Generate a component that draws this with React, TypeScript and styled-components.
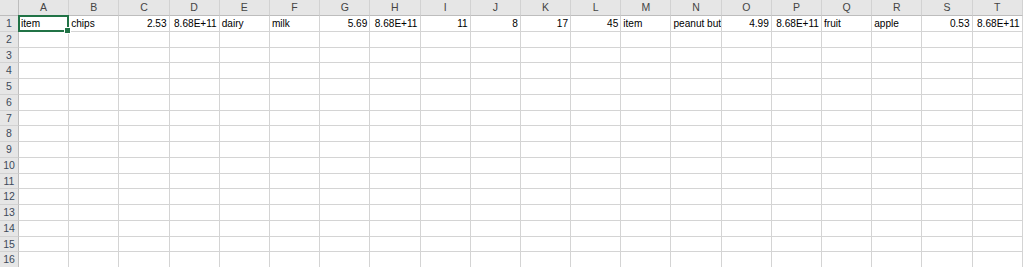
import React from "react";
import styled, { createGlobalStyle } from "styled-components";

const Global = createGlobalStyle`
  html, body { margin: 0; padding: 0; background: #ffffff; overflow: hidden; }
  body { font-family: "Liberation Sans", Arial, sans-serif; }
`;

const COLS = "ABCDEFGHIJKLMNOPQRST".split("");
const ROWS = 16;

type Val = { v: string; num?: boolean };
const row1: Val[] = [
  { v: "item" },
  { v: "chips" },
  { v: "2.53", num: true },
  { v: "8.68E+11", num: true },
  { v: "dairy" },
  { v: "milk" },
  { v: "5.69", num: true },
  { v: "8.68E+11", num: true },
  { v: "11", num: true },
  { v: "8", num: true },
  { v: "17", num: true },
  { v: "45", num: true },
  { v: "item" },
  { v: "peanut butter" },
  { v: "4.99", num: true },
  { v: "8.68E+11", num: true },
  { v: "fruit" },
  { v: "apple" },
  { v: "0.53", num: true },
  { v: "8.68E+11", num: true },
];

const Sheet = styled.div`
  display: grid;
  grid-template-columns: 19px repeat(20, 50.2px);
  grid-template-rows: 16px repeat(16, 15.75px);
  width: 1024px;
  height: 267px;
  overflow: hidden;
  background: #ffffff;
`;

const Corner = styled.div`
  background: #e6e6e6;
  border-right: 1px solid #bdbdbd;
  border-bottom: 1px solid #bdbdbd;
  box-sizing: border-box;
`;

const ColHead = styled.div`
  background: #e6e6e6;
  border-right: 1px solid #d2d2d2;
  border-bottom: 1px solid #bdbdbd;
  box-sizing: border-box;
  color: #444444;
  font-size: 10.5px;
  line-height: 15px;
  text-align: center;
`;

const RowHead = styled.div`
  background: #e6e6e6;
  border-right: 1px solid #bdbdbd;
  border-bottom: 1px solid #d2d2d2;
  box-sizing: border-box;
  color: #3d4a5a;
  font-size: 10.5px;
  line-height: 15px;
  text-align: center;
`;

const Cell = styled.div<{ $num?: boolean }>`
  position: relative;
  border-right: 1px solid #d4d4d4;
  border-bottom: 1px solid #d4d4d4;
  box-sizing: border-box;
  color: #000000;
  font-size: 10.1px;
  line-height: 15px;
  padding: 0 2px 0 2px;
  white-space: nowrap;
  overflow: hidden;
  text-align: ${(p) => (p.$num ? "right" : "left")};
`;

const ActiveCell = styled(Cell)`
  overflow: visible;
  z-index: 2;
`;

const Selection = styled.div`
  position: absolute;
  left: -1px;
  top: -1px;
  right: -1px;
  bottom: -1px;
  border: 2px solid #217346;
  pointer-events: none;
`;

const Handle = styled.div`
  position: absolute;
  right: -4px;
  bottom: -4px;
  width: 5px;
  height: 5px;
  background: #217346;
  border: 1px solid #ffffff;
`;

const CellText = styled.span`
  position: relative;
  z-index: 1;
`;

export default function App() {
  const cells: React.ReactNode[] = [];
  cells.push(<Corner key="corner" />);
  COLS.forEach((c) => cells.push(<ColHead key={"h" + c}>{c}</ColHead>));
  for (let r = 1; r <= ROWS; r++) {
    cells.push(<RowHead key={"r" + r}>{r}</RowHead>);
    COLS.forEach((c, i) => {
      const val = r === 1 ? row1[i] : undefined;
      if (r === 1 && i === 0) {
        cells.push(
          <ActiveCell key={c + r}>
            <CellText>{val?.v}</CellText>
            <Selection>
              <Handle />
            </Selection>
          </ActiveCell>
        );
      } else {
        cells.push(
          <Cell key={c + r} $num={val?.num}>
            {val?.v}
          </Cell>
        );
      }
    });
  }
  return (
    <>
      <Global />
      <Sheet>{cells}</Sheet>
    </>
  );
}
